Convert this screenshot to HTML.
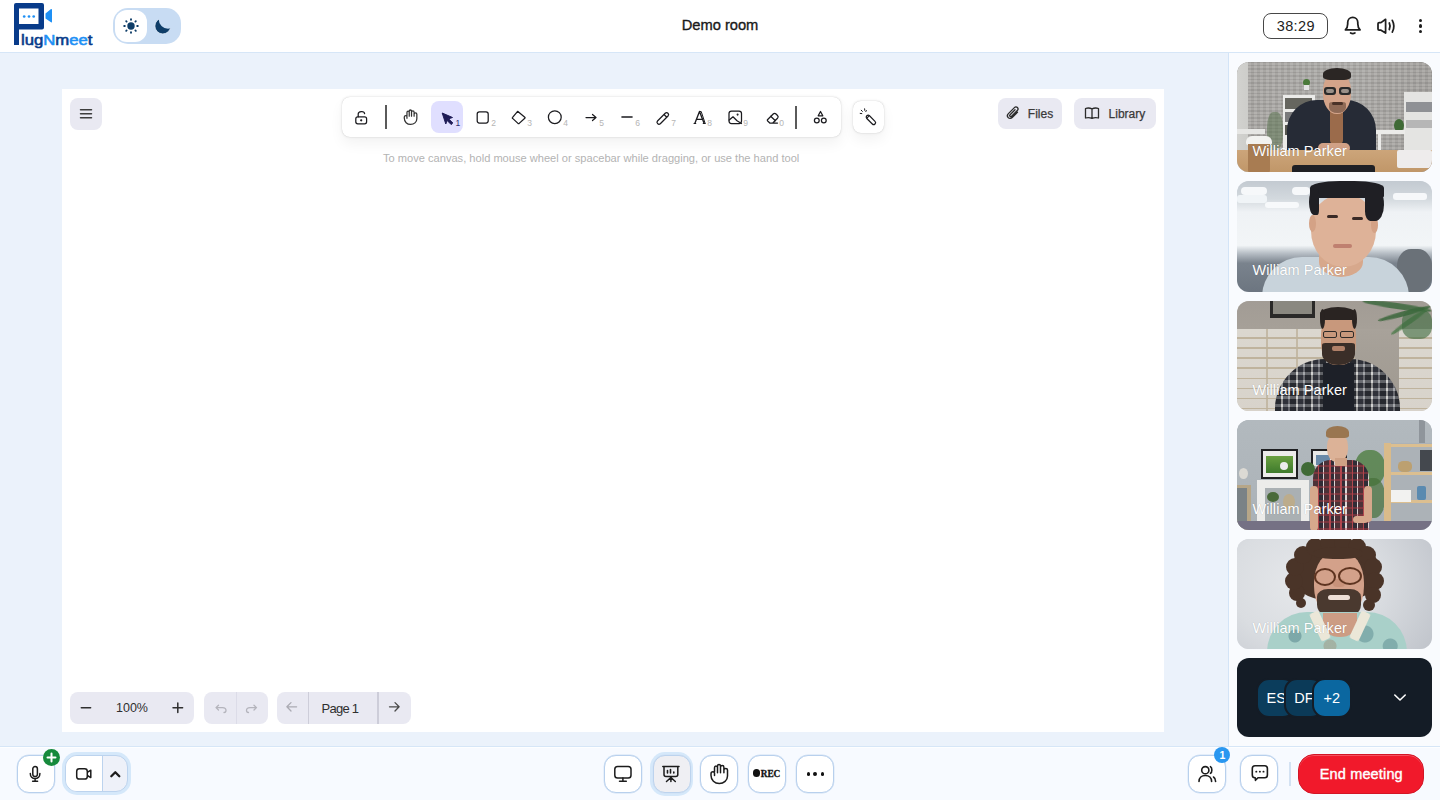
<!DOCTYPE html>
<html><head><meta charset="utf-8">
<style>
*{box-sizing:border-box;margin:0;padding:0}
html,body{width:1440px;height:800px;overflow:hidden;font-family:"Liberation Sans",sans-serif;background:#ebf2fb;position:relative}
.abs{position:absolute}
#header{left:0;top:0;width:1440px;height:53px;background:#fff;border-bottom:1px solid #d6e6f7}
#main{left:0;top:53px;width:1228px;height:693px;background:#ebf2fb}
#wb{left:62px;top:89px;width:1102px;height:643px;background:#fff}
#side{left:1228px;top:53px;width:212px;height:693px;background:#f9fbfe;border-left:1px solid #d3e4f7}
#footer{left:0;top:746px;width:1440px;height:54px;background:#f7faff;border-top:1px solid #d6e6f7;box-shadow:inset 0 1px 0 #fdfeff}
.title{left:0;width:1440px;top:17px;text-align:center;font-size:14.7px;line-height:17px;color:#1a1a1a;-webkit-text-stroke:0.35px #1a1a1a}
.btng{background:#e9e9f2}
.island{background:#fff;box-shadow:0 0 1px rgba(0,0,0,0.2),0 0 3.13px rgba(0,0,0,0.09),0 7px 14px rgba(0,0,0,0.05)}
.sub{font-size:8.5px;line-height:10px;color:#b5b5b5}
.hint{font-size:11.1px;line-height:14px;color:#b3b3b3;white-space:nowrap}
.btxt{font-size:12px;line-height:14px;color:#3a3a3a;white-space:nowrap;-webkit-text-stroke:0.25px #3a3a3a;margin-top:0.6px}
.ztxt{font-size:12.5px;line-height:15px;color:#2f2f2f;white-space:nowrap}
.fbtn{width:38px;height:38px;border-radius:12px;background:#fff;border:1px solid #b8d0ed;box-shadow:0 0 0 0.4px #cfe0f4}
.tile{left:1236.5px;width:195px;height:110.3px;border-radius:12px;overflow:hidden}
.tname{position:absolute;left:16px;top:81px;font-size:14.5px;line-height:17px;color:#fff;white-space:nowrap}
.av{width:40px;height:40px;border-radius:13px;border:2px solid #141c26;color:#fff;font-size:14.5px;line-height:36px;text-align:center}
.tile i{position:absolute;display:block;filter:blur(0.4px)}
.tname{font-weight:normal;letter-spacing:0.07px;text-shadow:0 0 1px rgba(0,0,0,.25)}
</style></head><body>
<div id="header" class="abs"></div>
<div class="abs title">Demo room</div>
<svg class="abs" style="left:0;top:0" width="100" height="52" viewBox="0 0 100 52">
 <path d="M14 5 Q14 3 16 3 L42 3 Q44 3 44 5 L44 27.5 Q44 29.5 42 29.5 L19 29.5 L19 45 L14 45 Z M19 8.5 L19 24 L38.5 24 L38.5 8.5 Z" fill="#083b8a" fill-rule="evenodd"/>
 <circle cx="24.2" cy="16.5" r="1.35" fill="#1e90f5"/><circle cx="29" cy="16.5" r="1.35" fill="#1e90f5"/><circle cx="33.7" cy="16.5" r="1.35" fill="#1e90f5"/>
 <path d="M45.5 13.5 L51 9 Q52 8.5 52 10 L52 21.5 Q52 23 51 22.3 L45.5 18.5 Z" fill="#1e90f5"/>
 <text x="21" y="44.5" font-family="Liberation Sans" font-weight="normal" stroke-width="0.55" font-size="14.5" textLength="71.5" lengthAdjust="spacingAndGlyphs"><tspan fill="#083b8a" stroke="#083b8a">lug</tspan><tspan fill="#1e90f5" stroke="#1e90f5">N</tspan><tspan fill="#083b8a" stroke="#083b8a">m</tspan><tspan fill="#1e90f5" stroke="#1e90f5">ee</tspan><tspan fill="#083b8a" stroke="#083b8a">t</tspan></text>
</svg>
<div class="abs" style="left:113px;top:8px;width:68px;height:36px;border-radius:15px;background:#c8dcf3"></div>
<div class="abs" style="left:115px;top:10px;width:32px;height:32px;border-radius:12px;background:#fff"></div>
<svg class="abs" style="left:118px;top:13px" width="26" height="26" viewBox="0 0 26 26">
 <circle cx="13" cy="13" r="3.7" fill="#0e3d68"/>
 <g stroke="#0e3d68" stroke-width="1.9" stroke-linecap="round">
  <line x1="13" y1="6.2" x2="13" y2="6.8"/><line x1="13" y1="19.2" x2="13" y2="19.8"/>
  <line x1="6.2" y1="13" x2="6.8" y2="13"/><line x1="19.2" y1="13" x2="19.8" y2="13"/>
  <line x1="8.2" y1="8.2" x2="8.6" y2="8.6"/><line x1="17.4" y1="17.4" x2="17.8" y2="17.8"/>
  <line x1="8.2" y1="17.8" x2="8.6" y2="17.4"/><line x1="17.4" y1="8.6" x2="17.8" y2="8.2"/>
 </g>
</svg>
<svg class="abs" style="left:150px;top:13px" width="26" height="26" viewBox="0 0 26 26">
 <circle cx="12.8" cy="13" r="7.9" fill="#0e3d68" stroke="#e8f1fb" stroke-width="0.7"/><circle cx="18" cy="6.5" r="9.2" fill="#c8dcf3"/>
</svg>
<div class="abs" style="left:1263px;top:13px;width:65px;height:26px;border:1.8px solid #474747;border-radius:8px;font-size:14.5px;line-height:24px;text-align:center;color:#222;letter-spacing:0.35px;text-indent:0.6px">38:29</div>
<svg class="abs" style="left:1340px;top:10px" width="90" height="32" viewBox="1340 10 90 32" fill="none" stroke="#1e1e1e" stroke-width="1.75" stroke-linecap="round" stroke-linejoin="round">
 <path d="M1345.4 29.8 L1360.1 29.8 C1358.4 28.2 1357.8 26.5 1357.8 24 L1357.8 22.6 C1357.8 19.4 1355.6 17.3 1352.75 17.3 C1349.9 17.3 1347.7 19.4 1347.7 22.6 L1347.7 24 C1347.7 26.5 1347.1 28.2 1345.4 29.8 Z"/>
 <path d="M1350.6 33 Q1352.75 34.1 1354.9 33"/>
 <path d="M1378 23.8 L1378 29 Q1378 30.2 1379.2 30.2 L1381 30.2 L1385.6 33 L1385.6 19.3 L1381 22.6 L1379.2 22.6 Q1378 22.6 1378 23.8 Z"/>
 <path d="M1389.3 23 Q1390.9 26.2 1389.3 29.5"/><path d="M1392.3 20.3 Q1395.5 26.2 1392.3 32.1"/>
</svg>
<div class="abs" style="left:1418.9px;top:18.5px;width:3.3px;height:3.3px;border-radius:50%;background:#1e1e1e"></div>
<div class="abs" style="left:1418.9px;top:24.3px;width:3.3px;height:3.3px;border-radius:50%;background:#1e1e1e"></div>
<div class="abs" style="left:1418.9px;top:30.2px;width:3.3px;height:3.3px;border-radius:50%;background:#1e1e1e"></div>

<div id="main" class="abs"></div>
<div id="wb" class="abs"></div>

<div class="abs btng" style="left:70px;top:97.5px;width:32px;height:32px;border-radius:8px"></div>
<svg class="abs" style="left:70px;top:97.5px" width="32" height="32" viewBox="0 0 32 32" stroke="#3d3d3d" stroke-width="1.5" stroke-linecap="round">
 <line x1="10.5" y1="11.75" x2="21.5" y2="11.75"/><line x1="10.5" y1="15.75" x2="21.5" y2="15.75"/><line x1="10.5" y1="19.8" x2="21.5" y2="19.8"/>
</svg>
<div class="abs island" style="left:342px;top:97px;width:498.5px;height:40px;border-radius:8px"></div>
<div class="abs" style="left:430.5px;top:101.25px;width:32px;height:32px;border-radius:8px;background:#e0dfff"></div>
<div class="abs island" style="left:852.5px;top:101.25px;width:31.5px;height:32px;border-radius:8px"></div>
<div class="abs" style="left:385.3px;top:105px;width:1.3px;height:24px;background:#5a5a5a"></div>
<div class="abs" style="left:795.3px;top:105.5px;width:1.3px;height:23.5px;background:#5a5a5a"></div>
<svg class="abs" style="left:340px;top:95px" width="560" height="45" viewBox="340 95 560 45" fill="none" stroke="#1b1b1f" stroke-width="1.25" stroke-linecap="round" stroke-linejoin="round">
 <!-- lock -->
 <rect x="355.8" y="116.8" width="10.8" height="7" rx="2"/>
 <path d="M358.2 116.8 L358.2 114 C358.2 111.2 364.2 110.6 364.6 113.6"/>
 <circle cx="361.2" cy="120.3" r="0.5" fill="#1b1b1f"/>
 <!-- hand -->
 <g transform="translate(404.3 110) scale(0.76) translate(-711 -764.5)" stroke-width="1.65" stroke="#333">
 <path d="M714.5 772 L714.5 767.8 Q714.5 766 716 766 Q717.5 766 717.5 767.8 L717.5 766.2 Q717.5 764.5 719 764.5 Q720.5 764.5 720.5 766.2 L720.5 767.3 Q720.5 765.6 722.2 765.6 Q723.9 765.6 723.9 767.3 L723.9 770 Q723.9 768.4 725.7 768.4 Q727.5 768.4 727.5 770 L727.5 776 C727.5 780.4 723.8 783.5 719.3 783.5 C714.6 783.5 711 780 711 775.5 L711 773.8 C711 772.6 712 771.8 713 771.8 C713.8 771.8 714.5 772.3 714.5 773 L714.5 775.5 M717.5 767.8 L717.5 772.7 M720.5 766.2 L720.5 772.7 M723.9 767.3 L723.9 772.7"/>
 </g>
 <!-- rect -->
 <rect x="477.2" y="111.8" width="11" height="11.2" rx="2.2"/>
 <!-- diamond -->
 <path d="M517.6 111.3 L524.8 117.3 Q525.4 117.8 524.8 118.3 L519.2 123.4 Q518.6 123.9 518 123.4 L512.6 118.4 Q512 117.9 512.6 117.4 Z" transform="rotate(0)"/>
 <!-- ellipse -->
 <circle cx="554.8" cy="117.2" r="6.4"/>
 <!-- arrow -->
 <path d="M586 117.5 L596 117.5 M592.5 114.5 L596 117.5 L592.5 120.5"/>
 <!-- line -->
 <path d="M622 117 L632 117" stroke-width="1.6"/>
 <!-- pencil -->
 <path d="M657.5 121 L665.2 113.3 C666 112.5 667.3 112.5 668 113.3 C668.7 114 668.7 115.2 668 116 L660.3 123.7 C659.6 124.3 658.3 124.3 657.6 123.6 C656.9 122.9 656.9 121.7 657.5 121 Z M664 114.5 L666.8 117.2"/>
 <!-- image -->
 <rect x="729" y="111" width="12.5" height="12.5" rx="2.5"/>
 <path d="M729.2 120 L733 116.8 L737 120.8 L741.5 123.5" /><circle cx="737.6" cy="114.6" r="0.4" fill="#1b1b1f"/>
 <!-- eraser -->
 <path d="M770.5 123 L777.5 123 M767.7 119.5 L773.2 114 C774 113.2 775.2 113.2 776 114 L777.5 115.5 C778.3 116.3 778.3 117.5 777.5 118.3 L772.8 123 L769.8 123 L767.7 121 C767.2 120.5 767.2 120 767.7 119.5 Z M770.7 116.2 L775.4 120.8"/>
 <!-- extra shapes -->
 <path d="M820.5 111.5 L818.2 115.8 L822.8 115.8 Z"/>
 <circle cx="816.8" cy="120.5" r="2.4"/><circle cx="823.8" cy="120.5" r="2.4"/>
 <!-- wand -->
 <rect x="865.1" y="118" width="11.6" height="3.8" rx="1.9" transform="rotate(45 870.9 119.9)" stroke-width="1.2"/>
 <path d="M868.6 116.4 L867.2 117.8" stroke-width="1.1"/>
 <path d="M861.2 110.2 L862.4 111.4 M864.6 108.8 L864.8 110.4 M860.2 113.4 L861.8 113.6 M866.4 110.6 L865.8 111.6" stroke-width="1"/>
</svg>
<svg class="abs" style="left:690px;top:108px" width="20" height="18" viewBox="0 0 20 18">
 <path d="M4.8 15.5 L9.5 3.5 L14.2 15.5 M6.6 11.3 L12.4 11.3" fill="none" stroke="#1b1b1f" stroke-width="1.35" stroke-linejoin="round"/>
 <path d="M9.5 3.5 L11.2 3.5 L15.2 15.5" fill="none" stroke="#1b1b1f" stroke-width="1"/>
 <path d="M3.6 15.5 L6.2 15.5 M12.8 15.5 L15.6 15.5" stroke="#1b1b1f" stroke-width="1.2"/>
</svg>
<svg class="abs" style="left:439px;top:110px" width="20" height="18" viewBox="0 0 20 18">
 <path d="M3.2 3 L13.5 7.5 L9.6 8.8 L13.8 13 L12.2 14.6 L8 10.4 L6.8 14 Z" fill="#1e1b56" stroke="#1e1b56" stroke-width="1" stroke-linejoin="round"/>
</svg>
<div class="abs sub" style="left:455.6px;top:118px;color:#31306e">1</div>
<div class="abs sub" style="left:491.3px;top:118px">2</div>
<div class="abs sub" style="left:527.3px;top:118px">3</div>
<div class="abs sub" style="left:563.3px;top:118px">4</div>
<div class="abs sub" style="left:599.3px;top:118px">5</div>
<div class="abs sub" style="left:635.3px;top:118px">6</div>
<div class="abs sub" style="left:671.3px;top:118px">7</div>
<div class="abs sub" style="left:707.3px;top:118px">8</div>
<div class="abs sub" style="left:743.3px;top:118px">9</div>
<div class="abs sub" style="left:779.3px;top:118px">0</div>
<div class="abs hint" style="left:383px;top:151px;width:416px">To move canvas, hold mouse wheel or spacebar while dragging, or use the hand tool</div>
<div class="abs btng" style="left:998px;top:97.6px;width:64px;height:31.5px;border-radius:8px"></div>
<div class="abs btng" style="left:1074px;top:97.6px;width:82px;height:31.5px;border-radius:8px"></div>
<svg class="abs" style="left:1004px;top:104px" width="20" height="20" viewBox="0 0 20 20" fill="none" stroke="#2b2b2b" stroke-width="1.3" stroke-linecap="round">
 <path d="M13.5 8.2 L8.2 13.5 C7 14.7 5.2 14.7 4.2 13.6 C3.2 12.6 3.2 10.8 4.4 9.6 L10.4 3.6 C11.3 2.7 12.6 2.7 13.4 3.5 C14.2 4.3 14.2 5.6 13.3 6.5 L7.6 12.2 C7.1 12.7 6.4 12.7 6 12.3 C5.6 11.9 5.6 11.2 6.1 10.7 L11 5.8"/>
</svg>
<div class="abs btxt" style="left:1027.8px;top:106px">Files</div>
<svg class="abs" style="left:1083px;top:105px" width="18" height="16" viewBox="0 0 18 16" fill="none" stroke="#2b2b2b" stroke-width="1.3" stroke-linejoin="round">
 <path d="M2.5 3.5 C4.5 2.8 6.8 2.8 9 3.8 C11.2 2.8 13.5 2.8 15.5 3.5 L15.5 13 C13.5 12.4 11.2 12.4 9 13.4 C6.8 12.4 4.5 12.4 2.5 13 Z M9 3.8 L9 13.4"/>
</svg>
<div class="abs btxt" style="left:1108.6px;top:106px">Library</div>
<div class="abs btng" style="left:70px;top:692px;width:124px;height:31.5px;border-radius:8px"></div>
<div class="abs btng" style="left:204.3px;top:692px;width:63.5px;height:31.5px;border-radius:8px"></div>
<div class="abs" style="left:235.5px;top:692px;width:1px;height:31.5px;background:#dcdce8"></div>
<div class="abs btng" style="left:276.5px;top:692px;width:134px;height:31.5px;border-radius:8px"></div>
<div class="abs" style="left:307.8px;top:692px;width:1.5px;height:31.5px;background:#cdcdd9"></div>
<div class="abs" style="left:377.3px;top:692px;width:1.5px;height:31.5px;background:#cdcdd9"></div>
<svg class="abs" style="left:65px;top:688px" width="350" height="40" viewBox="65 688 350 40" fill="none" stroke-linecap="round" stroke-linejoin="round">
 <path d="M81.3 707.8 L90.6 707.8" stroke="#2f2f2f" stroke-width="1.5"/>
 <path d="M173 707.8 L182.6 707.8 M177.8 703 L177.8 712.6" stroke="#2f2f2f" stroke-width="1.5"/>
 <path d="M218.5 705.2 L216 707.6 L218.5 710 M216 707.6 L222.5 707.6 C224.8 707.6 226 709 226 710.6 C226 712 225 712.5 224 712.5" stroke="#b4b4bc" stroke-width="1.3"/>
 <path d="M254 705.2 L256.5 707.6 L254 710 M256.5 707.6 L250 707.6 C247.7 707.6 246.5 709 246.5 710.6 C246.5 712 247.5 712.5 248.5 712.5" stroke="#b4b4bc" stroke-width="1.3"/>
 <path d="M287.2 706.8 L296.6 706.8 M291 702.6 L286.9 706.8 L291 711" stroke="#ababb3" stroke-width="1.3"/>
 <path d="M389.5 706.8 L398.9 706.8 M395 702.6 L399.1 706.8 L395 711" stroke="#4a4a4a" stroke-width="1.3"/>
</svg>
<div class="abs ztxt" style="left:116px;top:701px">100%</div>
<div class="abs ztxt" style="left:321.5px;top:700.5px;font-size:13px;letter-spacing:-0.75px">Page 1</div>
<div id="side" class="abs"></div>
<div class="abs tile" style="top:62px;background:#8f8b86">
<i style="left:0px;top:0px;width:195px;height:111px;background:linear-gradient(90deg,#d2d2cf 0,#cdcdca 11px,#a9a7a4 11px,#adaba8 55%,#a4a29f 100%);"></i><i style="left:11px;top:0px;width:184px;height:90px;background:repeating-linear-gradient(0deg,rgba(255,255,255,0.07) 0 2px,rgba(0,0,0,0.05) 2px 3.5px);"></i><i style="left:11px;top:0px;width:184px;height:90px;background:repeating-linear-gradient(90deg,rgba(255,255,255,0.05) 0 3px,rgba(0,0,0,0.04) 3px 6px);"></i><i style="left:46px;top:33px;width:32px;height:56px;background:#ebebe9;"></i><i style="left:48.5px;top:36px;width:27px;height:11px;background:#66665f;"></i><i style="left:48.5px;top:50px;width:27px;height:10px;background:#7a7a7c;"></i><i style="left:48.5px;top:63px;width:27px;height:10px;background:#55554f;"></i><i style="left:66px;top:17px;width:7px;height:7px;background:#4a7a3a;border-radius:50%;"></i><i style="left:67px;top:23px;width:5px;height:5px;background:#e4e4e4;"></i><i style="left:167px;top:30px;width:28px;height:58px;background:#e4e4e2;"></i><i style="left:169px;top:40px;width:26px;height:10px;background:#8f9195;"></i><i style="left:169px;top:58px;width:26px;height:8px;background:#b6b6b6;"></i><i style="left:157px;top:57px;width:10px;height:13px;background:#3f6a36;border-radius:50%;"></i><i style="left:0px;top:67px;width:28px;height:5px;background:#e6e6e4;"></i><i style="left:136px;top:68px;width:32px;height:4px;background:#ebebe9;"></i><i style="left:141px;top:72px;width:3px;height:17px;background:#ebebe9;"></i><i style="left:30px;top:50px;width:16px;height:38px;background:#55704a;border-radius:40%;opacity:.5;"></i><i style="left:50px;top:38px;width:89px;height:58px;background:#262b36;border-radius:30px 30px 4px 4px;"></i><i style="left:93px;top:48px;width:13px;height:34px;background:#9b6b4b;border-radius:0 0 4px 4px;"></i><i style="left:86px;top:10px;width:28px;height:42px;background:#d4a48a;border-radius:45% 45% 48% 48%;"></i><i style="left:86px;top:6px;width:28px;height:12px;background:#2b2624;border-radius:50% 50% 25% 25%;"></i><i style="left:87px;top:25px;width:12px;height:8px;background:#2a2a2a;border-radius:3px;"></i><i style="left:102px;top:25px;width:12px;height:8px;background:#2a2a2a;border-radius:3px;"></i><i style="left:89px;top:27px;width:8px;height:4px;background:#9a9088;border-radius:2px;"></i><i style="left:104px;top:27px;width:8px;height:4px;background:#9a9088;border-radius:2px;"></i><i style="left:92px;top:40px;width:17px;height:11px;background:#8f6a56;border-radius:20% 20% 50% 50%;"></i><i style="left:95px;top:40px;width:11px;height:3px;background:#4a3228;border-radius:2px;"></i><i style="left:81px;top:81px;width:32px;height:10px;background:#d0a086;border-radius:6px;"></i><i style="left:0px;top:88px;width:195px;height:23px;background:linear-gradient(180deg,#cca57a,#c09668);"></i><i style="left:55px;top:103px;width:83px;height:8px;background:#1f2024;border-radius:3px 3px 0 0;"></i><i style="left:160px;top:88px;width:35px;height:18px;background:#eeecec;border-radius:2px;"></i><i style="left:9px;top:74px;width:26px;height:9px;background:#f2f2f0;border-radius:6px 6px 2px 2px;"></i><i style="left:11px;top:82px;width:22px;height:29px;background:#a87c52;border-radius:0 0 3px 3px;"></i><b class="tname">William Parker</b>
</div>
<div class="abs tile" style="top:181.25px;background:#d7dde3">
<i style="left:0px;top:0px;width:195px;height:111px;background:linear-gradient(180deg,#c3cad1 0,#d3d9de 16%,#eff2f5 28%,#f2f5f7 58%,#b8bfc6 65%,#7a838d 74%,#6c7580 100%);"></i><i style="left:4px;top:6px;width:26px;height:8px;background:#f6f8fa;border-radius:4px;"></i><i style="left:55px;top:6px;width:18px;height:8px;background:#f6f8fa;border-radius:4px;"></i><i style="left:28px;top:21px;width:34px;height:6px;background:#f7f9fb;border-radius:3px;"></i><i style="left:156px;top:12px;width:34px;height:7px;background:#f6f8fa;border-radius:3px;"></i><i style="left:0px;top:14px;width:30px;height:8px;background:#f0f4f7;border-radius:3px;"></i><i style="left:160px;top:68px;width:35px;height:43px;background:#6a7178;border-radius:40%;"></i><i style="left:25px;top:76px;width:147px;height:40px;background:#c8d3db;border-radius:45px 45px 0 0;"></i><i style="left:82px;top:66px;width:44px;height:30px;background:#d7a88c;border-radius:0 0 50% 50%;"></i><i style="left:74px;top:14px;width:65px;height:72px;background:#deb298;border-radius:44% 44% 50% 50%;"></i><i style="left:72px;top:34px;width:7px;height:17px;background:#d4a286;border-radius:50%;"></i><i style="left:134px;top:36px;width:7px;height:16px;background:#d4a286;border-radius:50%;"></i><i style="left:73px;top:0px;width:74px;height:17px;background:#1f1f24;border-radius:40% 40% 10% 10%;"></i><i style="left:72px;top:8px;width:10px;height:26px;background:#1f1f24;border-radius:50% 20% 20% 50%;"></i><i style="left:128px;top:4px;width:19px;height:36px;background:#1f1f24;border-radius:30% 60% 50% 30%;"></i><i style="left:90px;top:34px;width:11px;height:3px;background:#3a2a26;border-radius:2px;"></i><i style="left:115px;top:36px;width:11px;height:3px;background:#3a2a26;border-radius:2px;"></i><i style="left:96px;top:63px;width:19px;height:4px;background:#bf8070;border-radius:2px;"></i><b class="tname">William Parker</b>
</div>
<div class="abs tile" style="top:300.5px;background:#c9c3ba">
<i style="left:0px;top:0px;width:195px;height:111px;background:linear-gradient(180deg,#a29c95 0,#a6a098 25%,#dbd7cf 25.5%,#d8d3cb 100%);"></i><i style="left:0px;top:28px;width:195px;height:83px;background:repeating-linear-gradient(180deg,transparent 0 8.5px,#bfb39d 8.5px 10px);"></i><i style="left:0px;top:28px;width:118px;height:83px;background:repeating-linear-gradient(90deg,transparent 0 29px,rgba(190,178,156,.8) 29px 30.5px);"></i><i style="left:118px;top:28px;width:44px;height:83px;background:linear-gradient(180deg,#a8a29a,#9e988f);"></i><i style="left:33px;top:0px;width:45px;height:17px;background:#2a2928;"></i><i style="left:36px;top:0px;width:39px;height:13px;background:#8a8880;"></i><i style="left:125px;top:2px;width:70px;height:6px;background:#3f6a40;border-radius:50%;transform:rotate(8deg);opacity:.85;"></i><i style="left:140px;top:10px;width:55px;height:5px;background:#3a663a;border-radius:50%;transform:rotate(-15deg);opacity:.85;"></i><i style="left:150px;top:18px;width:45px;height:5px;background:#4a7a48;border-radius:50%;transform:rotate(-35deg);opacity:.8;"></i><i style="left:165px;top:8px;width:30px;height:30px;background:#3d6b3f;border-radius:40%;opacity:.6;"></i><i style="left:38px;top:58px;width:125px;height:53px;background:repeating-linear-gradient(90deg,#2c2e35 0 6px,#cfcfcd 6px 8px,#3a3d46 8px 13px,#8f9197 13px 15px);border-radius:50px 50px 0 0;"></i><i style="left:38px;top:58px;width:125px;height:53px;background:repeating-linear-gradient(180deg,rgba(30,30,36,.35) 0 5px,rgba(220,220,220,0.3) 5px 8px);border-radius:50px 50px 0 0;"></i><i style="left:86px;top:62px;width:31px;height:49px;background:#1d2028;border-radius:0 0 0 0;"></i><i style="left:84px;top:10px;width:35px;height:54px;background:#c8987c;border-radius:45% 45% 40% 40%;"></i><i style="left:83px;top:6px;width:36px;height:13px;background:#2a2422;border-radius:50% 50% 10% 10%;"></i><i style="left:83px;top:8px;width:5px;height:20px;background:#2a2422;border-radius:50%;"></i><i style="left:115px;top:8px;width:5px;height:20px;background:#2a2422;border-radius:50%;"></i><i style="left:86px;top:30px;width:14px;height:7px;background:transparent;border-radius:2px;border:1.5px solid #2e2a28;box-sizing:border-box;"></i><i style="left:103px;top:30px;width:14px;height:7px;background:transparent;border-radius:2px;border:1.5px solid #2e2a28;box-sizing:border-box;"></i><i style="left:85px;top:42px;width:33px;height:22px;background:#3a2e28;border-radius:10% 10% 50% 50%;"></i><i style="left:95px;top:45px;width:13px;height:5px;background:#b08068;border-radius:2px;"></i><b class="tname">William Parker</b>
</div>
<div class="abs tile" style="top:419.75px;background:#a8aeb4">
<i style="left:0px;top:0px;width:195px;height:111px;background:linear-gradient(180deg,#b2b9be 0,#aeb5ba 60%,#a9b0b5 100%);"></i><i style="left:24px;top:29px;width:37px;height:30px;background:#1f2022;"></i><i style="left:26px;top:31px;width:33px;height:26px;background:#ececea;"></i><i style="left:29px;top:36px;width:27px;height:17px;background:linear-gradient(180deg,#6aa040,#3e7a2c);"></i><i style="left:43px;top:42px;width:8px;height:8px;background:#ececec;border-radius:50%;"></i><i style="left:74px;top:29px;width:36px;height:17px;background:#202022;"></i><i style="left:76px;top:31px;width:32px;height:15px;background:#e9e9e7;"></i><i style="left:79px;top:35px;width:14px;height:10px;background:#6a8aa8;"></i><i style="left:2px;top:48px;width:9px;height:11px;background:#dcdad4;border-radius:50%;"></i><i style="left:20px;top:60px;width:52px;height:50px;background:#ececea;"></i><i style="left:28px;top:68px;width:36px;height:42px;background:#aab0b3;"></i><i style="left:30px;top:72px;width:12px;height:10px;background:#4a6a3a;border-radius:50%;"></i><i style="left:46px;top:74px;width:12px;height:16px;background:#bcac8c;border-radius:50%;"></i><i style="left:0px;top:65px;width:14px;height:46px;background:#b6a688;"></i><i style="left:0px;top:68px;width:10px;height:40px;background:#7a8286;"></i><i style="left:118px;top:30px;width:30px;height:36px;background:#4f7f42;border-radius:45%;opacity:.8;"></i><i style="left:124px;top:58px;width:24px;height:40px;background:#466f3a;border-radius:45%;opacity:.7;"></i><i style="left:64px;top:42px;width:14px;height:14px;background:#3f6a36;border-radius:50%;"></i><i style="left:147px;top:23px;width:49px;height:80px;background:#acb2b7;"></i><i style="left:147px;top:23px;width:7px;height:80px;background:#dabb8a;"></i><i style="left:154px;top:24px;width:42px;height:3px;background:#dcbf90;"></i><i style="left:154px;top:52px;width:42px;height:3px;background:#dcbf90;"></i><i style="left:154px;top:80px;width:42px;height:3px;background:#dcbf90;"></i><i style="left:161px;top:41px;width:14px;height:11px;background:#bca070;border-radius:40%;"></i><i style="left:183px;top:30px;width:12px;height:21px;background:#44484e;"></i><i style="left:154px;top:70px;width:20px;height:12px;background:#f2f2f0;"></i><i style="left:180px;top:66px;width:9px;height:14px;background:#5a8ab0;border-radius:2px;"></i><i style="left:182px;top:0px;width:6px;height:23px;background:#8f959b;"></i><i style="left:0px;top:101px;width:195px;height:10px;background:#757184;"></i><i style="left:76px;top:40px;width:56px;height:72px;background:repeating-linear-gradient(90deg,#4d3238 0 5px,#b04a50 5px 6.5px,#302c36 6.5px 10px,#dcd4d4 10px 11.2px);border-radius:18px 18px 0 0;"></i><i style="left:76px;top:40px;width:56px;height:72px;background:repeating-linear-gradient(180deg,transparent 0 5px,rgba(180,60,70,0.45) 5px 7px);border-radius:18px 18px 0 0;"></i><i style="left:73px;top:66px;width:8px;height:45px;background:#d6a88c;border-radius:4px;"></i><i style="left:127px;top:66px;width:8px;height:36px;background:#d6a88c;border-radius:4px;"></i><i style="left:116px;top:96px;width:15px;height:7px;background:#d6a88c;border-radius:4px;"></i><i style="left:90px;top:13px;width:21px;height:29px;background:#dcb297;border-radius:45%;"></i><i style="left:89px;top:6px;width:23px;height:12px;background:#9a7650;border-radius:50% 50% 20% 20%;"></i><i style="left:98px;top:38px;width:12px;height:8px;background:#cfa185;"></i><b class="tname">William Parker</b>
</div>
<div class="abs tile" style="top:539px;background:#d9dce1">
<i style="left:0px;top:0px;width:195px;height:111px;background:radial-gradient(ellipse 150px 120px at 35% 40%,#e6e8eb 0,#dadde1 50%,#c0c4cb 100%);"></i><i style="left:56px;top:3px;width:86px;height:58px;background:#4a3428;border-radius:45% 45% 40% 40%;"></i><i style="left:52.0px;top:46.0px;width:16px;height:16px;background:#4a3428;border-radius:50%;"></i><i style="left:48.0px;top:33.0px;width:18px;height:18px;background:#4a3428;border-radius:50%;"></i><i style="left:49.0px;top:19.0px;width:18px;height:18px;background:#4a3428;border-radius:50%;"></i><i style="left:57.0px;top:7.0px;width:18px;height:18px;background:#4a3428;border-radius:50%;"></i><i style="left:69.0px;top:-1.0px;width:18px;height:18px;background:#4a3428;border-radius:50%;"></i><i style="left:83.0px;top:-5.0px;width:18px;height:18px;background:#4a3428;border-radius:50%;"></i><i style="left:97.0px;top:-5.0px;width:18px;height:18px;background:#4a3428;border-radius:50%;"></i><i style="left:111.0px;top:-1.0px;width:18px;height:18px;background:#4a3428;border-radius:50%;"></i><i style="left:121.0px;top:7.0px;width:18px;height:18px;background:#4a3428;border-radius:50%;"></i><i style="left:127.0px;top:19.0px;width:18px;height:18px;background:#4a3428;border-radius:50%;"></i><i style="left:129.0px;top:33.0px;width:18px;height:18px;background:#4a3428;border-radius:50%;"></i><i style="left:128.0px;top:48.0px;width:16px;height:16px;background:#4a3428;border-radius:50%;"></i><i style="left:126.0px;top:60.0px;width:12px;height:12px;background:#4a3428;border-radius:50%;"></i><i style="left:59.0px;top:59.0px;width:10px;height:10px;background:#4a3428;border-radius:50%;"></i><i style="left:77px;top:12px;width:50px;height:70px;background:#d3a18a;border-radius:45% 45% 50% 50%;"></i><i style="left:76px;top:8px;width:50px;height:12px;background:#4a3428;border-radius:50% 50% 40% 40%;"></i><i style="left:80px;top:50px;width:44px;height:31px;background:#4a392f;border-radius:25% 25% 50% 50%;"></i><i style="left:91px;top:56px;width:22px;height:5px;background:#eedfd6;border-radius:3px;"></i><i style="left:96px;top:40px;width:12px;height:8px;background:#c8927a;border-radius:40%;"></i><i style="left:77px;top:29px;width:22px;height:18px;background:transparent;border-radius:50%;border:2.6px solid #5e3420;box-sizing:border-box;"></i><i style="left:101px;top:28px;width:24px;height:18px;background:transparent;border-radius:50%;border:2.6px solid #5e3420;box-sizing:border-box;"></i><i style="left:30px;top:73px;width:140px;height:40px;background:#a9d0c9;border-radius:50px 50px 0 0;"></i><i style="left:30px;top:73px;width:140px;height:40px;background:radial-gradient(circle at 20% 60%,rgba(70,120,130,.45) 0 6px,transparent 7px),radial-gradient(circle at 70% 55%,rgba(70,120,130,.4) 0 8px,transparent 9px),radial-gradient(circle at 45% 85%,rgba(150,110,80,.3) 0 6px,transparent 7px),radial-gradient(circle at 88% 85%,rgba(70,120,130,.4) 0 7px,transparent 8px);border-radius:50px 50px 0 0;"></i><i style="left:86px;top:74px;width:34px;height:24px;background:#cc9c84;border-radius:0 0 50% 50%;"></i><i style="left:78px;top:72px;width:10px;height:30px;background:#ebe7d8;border-radius:2px;transform:rotate(-25deg);"></i><i style="left:118px;top:72px;width:10px;height:30px;background:#ebe7d8;border-radius:2px;transform:rotate(25deg);"></i><b class="tname">William Parker</b>
</div>
<div class="abs" style="left:1236.5px;top:658.25px;width:195px;height:79px;border-radius:12px;background:#141c26"></div>
<div class="abs av" style="left:1256.2px;top:678px;background:#0b3d5c">ES</div>
<div class="abs av" style="left:1284px;top:678px;background:#0b3a58">DF</div>
<div class="abs av" style="left:1311.8px;top:678px;background:#0b67a0">+2</div>
<svg class="abs" style="left:1390px;top:687px" width="20" height="20" viewBox="0 0 20 20" fill="none" stroke="#fff" stroke-width="1.6" stroke-linecap="round" stroke-linejoin="round"><path d="M4.8 8 L10 13 L15.2 8"/></svg>

<div id="footer" class="abs"></div>
<div class="abs fbtn" style="left:16.5px;top:755px"></div>
<svg class="abs" style="left:24px;top:763px" width="22" height="22" viewBox="0 0 22 22" fill="none" stroke="#1c1c1c" stroke-width="1.5" stroke-linecap="round">
 <rect x="8.8" y="3.5" width="4.6" height="10" rx="2.3"/>
 <path d="M6.3 10.5 C6.3 13.5 8.3 15.6 11.1 15.6 C13.9 15.6 15.9 13.5 15.9 10.5 M11.1 15.6 L11.1 18.3 M8.6 18.3 L13.6 18.3"/>
</svg>
<div class="abs" style="left:43px;top:749.3px;width:17px;height:17px;border-radius:50%;background:#168a3c"></div>
<svg class="abs" style="left:43px;top:749.3px" width="17" height="17" viewBox="0 0 17 17" stroke="#fff" stroke-width="2" stroke-linecap="round"><path d="M8.5 4.5 L8.5 12.5 M4.5 8.5 L12.5 8.5"/></svg>
<div class="abs" style="left:62px;top:752.3px;width:69px;height:43px;border-radius:15px;background:#d5e8fa"></div>
<div class="abs" style="left:65px;top:755.3px;width:63px;height:37px;border-radius:12px;background:#eef1f9;border:1px solid #bcd3ee;overflow:hidden">
 <div style="position:absolute;left:0;top:0;width:36.5px;height:37px;background:#fff;border-right:1px solid #bcd3ee"></div>
</div>
<svg class="abs" style="left:73px;top:763px" width="22" height="22" viewBox="0 0 22 22" fill="none" stroke="#1c1c1c" stroke-width="1.5" stroke-linejoin="round">
 <rect x="3.7" y="5.8" width="10.6" height="10.2" rx="2.6"/>
 <path d="M14.3 9.3 L17.8 7.2 L17.8 14.6 L14.3 12.5"/>
</svg>
<svg class="abs" style="left:104px;top:763px" width="22" height="22" viewBox="0 0 22 22" fill="none" stroke="#1c1c1c" stroke-width="2.3" stroke-linecap="round" stroke-linejoin="round">
 <path d="M7.3 13.3 L11.3 9.3 L15.3 13.3"/>
</svg>

<div class="abs fbtn" style="left:604px;top:755px"></div>
<div class="abs" style="left:649.5px;top:752px;width:43px;height:43.5px;border-radius:15px;background:#d5e8fa"></div>
<div class="abs fbtn" style="left:652.5px;top:755px;background:#efeff3;border-color:#bcd3ee"></div>
<div class="abs fbtn" style="left:700px;top:755px"></div>
<div class="abs fbtn" style="left:748.3px;top:755px"></div>
<div class="abs fbtn" style="left:796.3px;top:755px"></div>
<svg class="abs" style="left:600px;top:750px" width="240" height="48" viewBox="600 750 240 48" fill="none" stroke="#1c1c1c" stroke-width="1.5" stroke-linecap="round" stroke-linejoin="round">
 <rect x="614.8" y="766.5" width="16.2" height="11.5" rx="2.8"/>
 <path d="M622.9 778 L622.9 781 M619.5 781.3 L626.3 781.3"/>
 <path d="M662.8 766.5 L679 766.5 M664 766.5 L664 774.5 Q664 776.5 666 776.5 L675.8 776.5 Q677.8 776.5 677.8 774.5 L677.8 766.5 M670.9 776.5 L670.9 781.5 M670.9 777.5 L666.5 781.5 M670.9 777.5 L675.3 781.5"/>
 <path d="M667.5 770.5 L667.5 773 M670.5 769.5 L670.5 773 M673.8 772 L673.8 773" stroke-width="1.6"/>
 <path d="M714.5 772 L714.5 767.8 Q714.5 766 716 766 Q717.5 766 717.5 767.8 L717.5 766.2 Q717.5 764.5 719 764.5 Q720.5 764.5 720.5 766.2 L720.5 767.3 Q720.5 765.6 722.2 765.6 Q723.9 765.6 723.9 767.3 L723.9 770 Q723.9 768.4 725.7 768.4 Q727.5 768.4 727.5 770 L727.5 776 C727.5 780.4 723.8 783.5 719.3 783.5 C714.6 783.5 711 780 711 775.5 L711 773.8 C711 772.6 712 771.8 713 771.8 C713.8 771.8 714.5 772.3 714.5 773 L714.5 775.5 M717.5 767.8 L717.5 772.7 M720.5 766.2 L720.5 772.7 M723.9 767.3 L723.9 772.7"/>
</svg>
<div class="abs" style="left:752.5px;top:768.8px;width:7.8px;height:7.8px;border-radius:50%;background:#111"></div>
<div class="abs" style="left:760.8px;top:767.6px;font-family:'Liberation Serif',serif;font-weight:bold;font-size:9.3px;line-height:12px;color:#111;letter-spacing:-0.1px;-webkit-text-stroke:0.3px #111">REC</div>
<div class="abs" style="left:806.5px;top:772px;width:3.8px;height:3.8px;border-radius:50%;background:#111"></div>
<div class="abs" style="left:813.4px;top:772px;width:3.8px;height:3.8px;border-radius:50%;background:#111"></div>
<div class="abs" style="left:820.6px;top:772px;width:3.8px;height:3.8px;border-radius:50%;background:#111"></div>

<div class="abs fbtn" style="left:1188.3px;top:755px"></div>
<div class="abs fbtn" style="left:1240.4px;top:755px"></div>
<svg class="abs" style="left:1188px;top:755px" width="100" height="38" viewBox="1188 755 100 38" fill="none" stroke="#1c1c1c" stroke-width="1.6" stroke-linecap="round" stroke-linejoin="round">
 <circle cx="1205.3" cy="770.2" r="3.6"/>
 <path d="M1199 781.5 C1199 777.8 1201.6 775.5 1205.3 775.5 C1209 775.5 1211.6 777.8 1211.6 781.5"/>
 <path d="M1210.5 766.7 C1212.3 767.6 1212.3 772.3 1210.5 773.3"/>
 <path d="M1213.5 777 C1214.8 777.8 1215.6 779.4 1215.6 781.5"/>
 <path d="M1252.3 768.5 C1252.3 766.8 1253.3 765.8 1255 765.8 L1264.7 765.8 C1266.4 765.8 1267.4 766.8 1267.4 768.5 L1267.4 775 C1267.4 776.7 1266.4 777.7 1264.7 777.7 L1258 777.7 L1255.5 780.3 L1255.2 777.7 L1255 777.7 C1253.3 777.7 1252.3 776.7 1252.3 775 Z"/>
 <path d="M1256.2 771.7 L1256.4 771.7 M1259.8 771.7 L1260 771.7 M1263.4 771.7 L1263.6 771.7" stroke-width="1.8"/>
</svg>
<div class="abs" style="left:1214.3px;top:747px;width:16px;height:16px;border-radius:50%;background:#2a97f0;color:#fff;font-size:10.5px;line-height:16px;text-align:center;font-weight:bold">1</div>
<div class="abs" style="left:1289.3px;top:762px;width:1.5px;height:24px;background:#d3e2f3"></div>
<div class="abs" style="left:1298.3px;top:754px;width:126px;height:40px;border-radius:16px;background:#f1192b;border:1px solid #d31526;box-shadow:inset 0 1px 0 rgba(255,255,255,0.25);color:#fff;font-size:14.5px;line-height:38px;text-align:center;-webkit-text-stroke:0.4px #fff;letter-spacing:0.15px">End meeting</div>

</body></html>
